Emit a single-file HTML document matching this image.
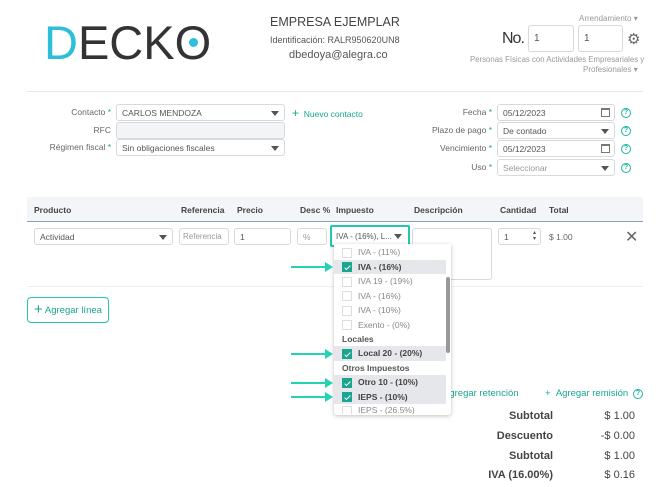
<!DOCTYPE html><html><head><meta charset="utf-8"><style>
*{box-sizing:border-box;margin:0;padding:0}
body{width:670px;height:487px;background:#fff;font-family:"Liberation Sans",sans-serif;color:#555;position:relative;overflow:hidden}
.a{position:absolute;white-space:nowrap}
.inp{position:absolute;border:1px solid #d6d9de;border-radius:3px;background:#fff;font-size:8.5px;color:#555;padding:0 5px;display:flex;align-items:center;overflow:hidden;white-space:nowrap}
.lbl{position:absolute;font-size:8.5px;color:#666;text-align:right;white-space:nowrap}
.car{position:absolute;right:5px;top:50%;margin-top:-2px;border-left:4px solid transparent;border-right:4px solid transparent;border-top:5px solid #555}
.hlp{position:absolute;width:10px;height:10px;border:1.3px solid #19b8a0;border-radius:50%;font-size:7px;color:#19b8a0;text-align:center;line-height:8px;font-weight:bold}
.th{position:absolute;top:205px;font-size:8.5px;font-weight:bold;color:#444}
.it{position:absolute;left:334px;width:112px;height:14.5px;font-size:8.5px;color:#888;padding-left:24px;line-height:14.5px}
.it .cb{position:absolute;left:8px;top:2.5px;width:10px;height:10px;border:1px solid #ddd;background:#fff}
.it.on{background:#e6e7ea;color:#444;font-weight:bold}
.it.on .cb{background:#19a58f;border-color:#19a58f}
.it.on .cb:after{content:"";position:absolute;left:3px;top:1px;width:2px;height:5px;border:solid #fff;border-width:0 1.3px 1.3px 0;transform:rotate(45deg)}
.ar{position:absolute;left:291px;width:36px;height:2px;background:#22d3b4}
.ar:after{content:"";position:absolute;right:-6px;top:-4px;border-top:5px solid transparent;border-bottom:5px solid transparent;border-left:8px solid #22d3b4}
.tot{position:absolute;font-size:11px;color:#444;font-weight:bold}
</style></head><body>
<div class="a" style="left:44px;top:17px;font-size:47px;color:#333;line-height:52px"><span style="color:#2bbfd9">D</span>ECK<span style="position:relative">O<span style="position:absolute;left:50%;top:50%;width:9px;height:9px;margin:-5px 0 0 -4px;border-radius:50%;background:#2bbfd9"></span></span></div>
<div class="a" style="left:270px;top:15px;font-size:12.5px;color:#444">EMPRESA EJEMPLAR</div>
<div class="a" style="left:270px;top:35px;font-size:9px;color:#555">Identificación: RALR950620UN8</div>
<div class="a" style="left:289px;top:49px;font-size:11px;color:#555">dbedoya@alegra.co</div>
<div class="a" style="left:579px;top:14px;font-size:8px;color:#999">Arrendamiento ▾</div>
<div class="a" style="left:502px;top:30px;font-size:16px;color:#333;letter-spacing:-1px">No.</div>
<div class="inp" style="left:528px;top:25px;width:46px;height:27px;font-size:10px">1</div>
<div class="inp" style="left:578px;top:25px;width:45px;height:27px;font-size:10px">1</div>
<div class="a" style="left:627px;top:30px;font-size:15px;color:#666">⚙</div>
<div class="a" style="left:470px;top:55px;font-size:7.8px;color:#999">Personas Físicas con Actividades Empresariales y</div>
<div class="a" style="left:583px;top:65px;font-size:8px;color:#999">Profesionales ▾</div>
<div class="a" style="left:27px;top:91px;width:616px;height:1px;background:#e5e7ea"></div>

<div class="lbl" style="left:0;width:111px;top:107px">Contacto <span style="color:#19a58f">*</span></div>
<div class="inp" style="left:116px;top:104px;width:169px;height:17px">CARLOS MENDOZA<span class="car"></span></div>
<div class="a" style="left:292px;top:106px;font-size:8.5px;color:#19a58f"><b style="font-size:12px;font-weight:normal">+</b>&nbsp; Nuevo contacto</div>
<div class="lbl" style="left:0;width:111px;top:125px">RFC</div>
<div class="inp" style="left:116px;top:122px;width:169px;height:17px;background:#f3f4f6"></div>
<div class="lbl" style="left:0;width:111px;top:142px">Régimen fiscal <span style="color:#19a58f">*</span></div>
<div class="inp" style="left:116px;top:139px;width:169px;height:17px">Sin obligaciones fiscales<span class="car"></span></div>

<div class="lbl" style="left:380px;width:112px;top:107px">Fecha <span style="color:#19a58f">*</span></div>
<div class="inp" style="left:497px;top:104px;width:118px;height:17px">05/12/2023<span style="position:absolute;right:4px;top:3px;width:9px;height:9px;border:1px solid #777;border-top-width:2px"></span></div>
<div class="hlp" style="left:621px;top:108px">?</div>
<div class="lbl" style="left:380px;width:112px;top:125px">Plazo de pago <span style="color:#19a58f">*</span></div>
<div class="inp" style="left:497px;top:122px;width:118px;height:17px">De contado<span class="car"></span></div>
<div class="hlp" style="left:621px;top:126px">?</div>
<div class="lbl" style="left:380px;width:112px;top:143px">Vencimiento <span style="color:#19a58f">*</span></div>
<div class="inp" style="left:497px;top:140px;width:118px;height:17px">05/12/2023<span style="position:absolute;right:4px;top:3px;width:9px;height:9px;border:1px solid #777;border-top-width:2px"></span></div>
<div class="hlp" style="left:621px;top:144px">?</div>
<div class="lbl" style="left:380px;width:112px;top:162px">Uso <span style="color:#19a58f">*</span></div>
<div class="inp" style="left:497px;top:159px;width:118px;height:17px;color:#999">Seleccionar<span class="car"></span></div>
<div class="hlp" style="left:621px;top:163px">?</div>

<div class="a" style="left:27px;top:197px;width:616px;height:25px;background:#f4f5f8;border-bottom:1px solid #8aa4b0"></div>
<div class="th" style="left:34px">Producto</div><div class="th" style="left:181px">Referencia</div><div class="th" style="left:237px">Precio</div><div class="th" style="left:300px">Desc %</div><div class="th" style="left:336px">Impuesto</div><div class="th" style="left:414px">Descripción</div><div class="th" style="left:500px">Cantidad</div><div class="th" style="left:549px">Total</div>

<div class="inp" style="left:34px;top:228px;width:139px;height:17px">Actividad<span class="car"></span></div>
<div class="inp" style="left:179px;top:228px;width:50px;height:17px;color:#999;font-size:8px;padding:0 3px">Referencia</div>
<div class="inp" style="left:234px;top:228px;width:57px;height:17px">1</div>
<div class="inp" style="left:297px;top:228px;width:30px;height:17px;color:#999">%</div>
<div class="inp" style="left:330px;top:225px;width:80px;height:22px;border:2px solid #22c7ac;border-radius:2px;font-size:8px;padding:0 4px">IVA - (16%), L...<span class="car" style="right:6px"></span></div>
<div class="inp" style="left:412px;top:228px;width:80px;height:52px"></div>
<div class="inp" style="left:498px;top:228px;width:43px;height:17px">1<span style="position:absolute;right:4px;top:1px;font-size:6px;line-height:6px">▴<br>▾</span></div>
<div class="a" style="left:549px;top:232px;font-size:8.5px;color:#666">$ 1.00</div>
<div class="a" style="left:625px;top:227px;font-size:16px;color:#666">✕</div>
<div class="a" style="left:27px;top:286px;width:616px;height:1px;background:#eef0f2"></div>
<div class="a" style="left:27px;top:297px;width:82px;height:26px;border:1px solid #22c7ac;border-radius:4px;font-size:9.5px;color:#19a58f;line-height:24px;padding-left:6px"><span style="font-size:15px;vertical-align:-1px">+</span> Agregar línea</div>

<div class="a" style="left:443px;top:388px;font-size:9.5px;color:#19a58f">Agregar retención</div>
<div class="a" style="left:545px;top:388px;font-size:9.5px;color:#19a58f">+ &nbsp;Agregar remisión</div>
<div class="hlp" style="left:633px;top:389px">?</div>
<div class="tot" style="left:470px;width:83px;text-align:right;top:410px">Subtotal</div><div class="tot" style="left:560px;width:75px;text-align:right;top:410px;font-weight:normal">$ 1.00</div>
<div class="tot" style="left:470px;width:83px;text-align:right;top:430px">Descuento</div><div class="tot" style="left:560px;width:75px;text-align:right;top:430px;font-weight:normal">-$ 0.00</div>
<div class="tot" style="left:470px;width:83px;text-align:right;top:450px">Subtotal</div><div class="tot" style="left:560px;width:75px;text-align:right;top:450px;font-weight:normal">$ 1.00</div>
<div class="tot" style="left:450px;width:103px;text-align:right;top:469px">IVA (16.00%)</div><div class="tot" style="left:560px;width:75px;text-align:right;top:469px;font-weight:normal">$ 0.16</div>

<div class="a" style="left:334px;top:244px;width:117px;height:171px;background:#fff;box-shadow:0 1px 4px rgba(0,0,0,.25);border-radius:0 0 3px 3px"></div>
<div class="a" style="left:446px;top:277px;width:4px;height:76px;background:#999;border-radius:2px"></div>
<div class="it" style="top:245px"><span class="cb"></span>IVA - (11%)</div>
<div class="it on" style="top:259.5px"><span class="cb"></span>IVA - (16%)</div>
<div class="it" style="top:274px"><span class="cb"></span>IVA 19 - (19%)</div>
<div class="it" style="top:288.5px"><span class="cb"></span>IVA - (16%)</div>
<div class="it" style="top:303px"><span class="cb"></span>IVA - (10%)</div>
<div class="it" style="top:317.5px"><span class="cb"></span>Exento - (0%)</div>
<div class="it" style="top:332px;padding-left:8px;font-weight:bold;color:#555">Locales</div>
<div class="it on" style="top:346px"><span class="cb"></span>Local 20 - (20%)</div>
<div class="it" style="top:360.5px;padding-left:8px;font-weight:bold;color:#555">Otros Impuestos</div>
<div class="it on" style="top:375px"><span class="cb"></span>Otro 10 - (10%)</div>
<div class="it on" style="top:389.5px"><span class="cb"></span>IEPS - (10%)</div>
<div class="it" style="top:403px;height:11px;overflow:hidden"><span class="cb"></span>IEPS - (26.5%)</div>
<div class="ar" style="top:266px"></div><div class="ar" style="top:353px"></div><div class="ar" style="top:382px"></div><div class="ar" style="top:396px"></div>
</body></html>
